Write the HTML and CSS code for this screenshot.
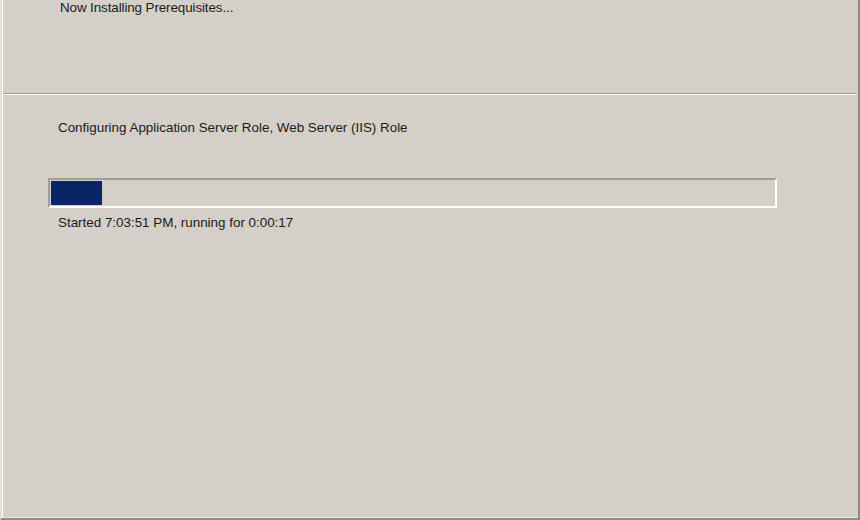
FILE: index.html
```html
<!DOCTYPE html>
<html>
<head>
<meta charset="utf-8">
<link rel="stylesheet" href="styles.css">
</head>
<body>
<div class="window">
  <div class="header">
    <div class="title">Now Installing Prerequisites...</div>
  </div>
  <div class="sep"></div>
  <div class="content">
    <div class="task">Configuring Application Server Role, Web Server (IIS) Role</div>
    <div class="progress"><div class="fill"></div></div>
    <div class="status">Started 7:03:51 PM, running for 0:00:17</div>
  </div>
</div>
</body>
</html>
```
FILE: styles.css
```css
html, body {
  margin: 0;
  padding: 0;
  background: #d4d0c8;
}
.window {
  width: 860px;
  height: 520px;
  box-sizing: border-box;
  background: #d4d0c8;
  border-left: 2px solid #e2dfd9;
  border-right: 2px solid #8c8a86;
  border-bottom: 2px solid #8c8a86;
  font-family: "Liberation Sans", Arial, sans-serif;
  font-size: 13.4px;
  color: #1a1a1a;
  display: flex;
  flex-direction: column;
  box-shadow: inset 1px 0 0 #ffffff, inset 0 -3px 0 -2px #ece9e4;
}
.header {
  height: 93px;
  padding-left: 58px;
  box-sizing: border-box;
}
.title {
  padding-top: 0;
  line-height: 15px;
  letter-spacing: -0.1px;
}
.sep {
  margin: 0 2px 0 1px;
  height: 1px;
  background: #a09d97;
  border-bottom: 1px solid #ffffff;
}
.content {
  padding: 25px 0 0 46px;
  flex: 1;
}
.task {
  margin-left: 10px;
  line-height: 15px;
}
.progress {
  margin-top: 43px;
  width: 729px;
  height: 30px;
  box-sizing: border-box;
  border-top: 2px solid #a09d97;
  border-left: 2px solid #a09d97;
  border-bottom: 2px solid #ffffff;
  border-right: 2px solid #ffffff;
  padding: 1px;
}
.fill {
  width: 51px;
  height: 100%;
  background: #0a2468;
}
.status {
  margin-left: 10px;
  margin-top: 7px;
  line-height: 15px;
}
```
